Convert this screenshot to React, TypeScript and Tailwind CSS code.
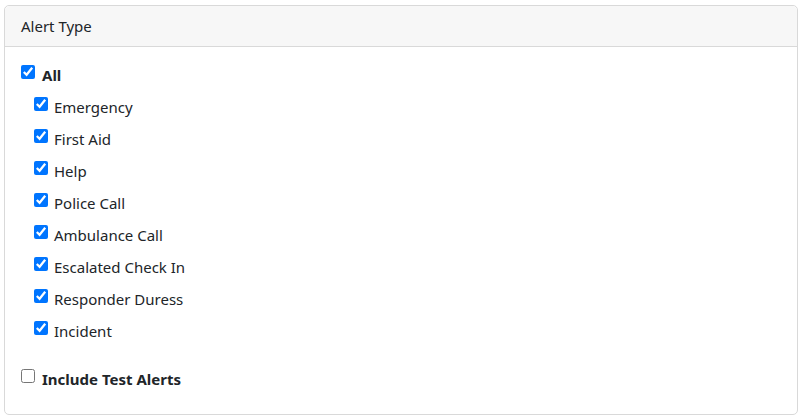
import { useState } from "react";

const alertTypes = [
	"Emergency",
	"First Aid",
	"Help",
	"Police Call",
	"Ambulance Call",
	"Escalated Check In",
	"Responder Duress",
	"Incident",
];

function App() {
	const [checked, setChecked] = useState<boolean[]>(alertTypes.map(() => true));
	const [testAlerts, setTestAlerts] = useState(false);
	const all = checked.every((c) => c);

	return (
		<div className="w-full h-[417px] bg-white px-[4px] pt-[5px] pb-[2px] text-[15px] text-[#212529]" style={{ fontFamily: '"Segoe UI", "Noto Sans", sans-serif' }}>
			<div className="h-full border border-[#d9d9d9] rounded-[5px] flex flex-col">
				<div className="h-[41px] bg-[#f7f7f7] border-b border-[#d9d9d9] rounded-t-[5px] px-4 flex items-center">
					Alert Type
				</div>
				<div className="px-4 pt-[17px]">
					<label className="flex items-center gap-[7px] h-[22px]">
						<input
							type="checkbox"
							className="w-[14px] h-[14px] m-0 -mt-[6px] accent-[#0075ff]"
							checked={all}
							onChange={() => setChecked(alertTypes.map(() => !all))}
						/>
						<span className="font-bold">All</span>
					</label>
					<div className="pl-[13px] pt-[5px] flex flex-col">
						{alertTypes.map((name, index) => (
							<label key={index} className="flex items-center gap-[6px] h-[32px]">
								<input
									type="checkbox"
									className="w-[14px] h-[14px] m-0 -mt-[6px] accent-[#0075ff]"
									checked={checked[index]}
									onChange={() => setChecked(checked.map((c, i) => (i === index ? !c : c)))}
								/>
								<span>{name}</span>
							</label>
						))}
					</div>
					<label className="flex items-center gap-[7px] h-[22px] mt-[21px]">
						<input
							type="checkbox"
							className="w-[14px] h-[14px] m-0 -mt-[6px] accent-[#0075ff]"
							checked={testAlerts}
							onChange={() => setTestAlerts(!testAlerts)}
						/>
						<span className="font-bold">Include Test Alerts</span>
					</label>
				</div>
			</div>
		</div>
	);
}

export default App;
